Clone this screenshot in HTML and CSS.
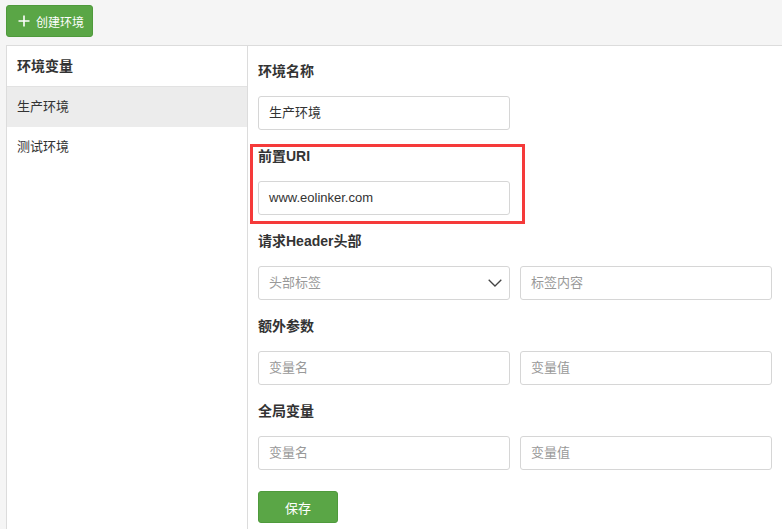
FILE: index.html
```html
<!DOCTYPE html>
<html lang="zh-CN">
<head>
<meta charset="utf-8">
<title>环境管理</title>
<link rel="stylesheet" href="styles.css">
</head>
<body>
<div class="topbar">
  <button class="btn-create"><svg class="plus" viewBox="0 0 12 12" width="12" height="12"><path d="M6 0.5V11.5M0.5 6H11.5" stroke="#fff" stroke-width="1.6" fill="none"/></svg><span>创建环境</span></button>
</div>
<div class="panel">
  <aside class="sidebar">
    <div class="side-head">环境变量</div>
    <div class="side-item active">生产环境</div>
    <div class="side-item">测试环境</div>
  </aside>
  <main class="content">
    <div class="group">
      <div class="label">环境名称</div>
      <div class="row"><div class="field">生产环境</div></div>
    </div>
    <div class="group marked">
      <div class="label">前置URI</div>
      <div class="row"><div class="field">www.eolinker.com</div></div>
    </div>
    <div class="group">
      <div class="label">请求Header头部</div>
      <div class="row">
        <div class="field placeholder select">头部标签<svg class="chev" viewBox="0 0 14 8" width="14" height="8"><path d="M0.7 0.7L7 7L13.3 0.7" stroke="#444" stroke-width="1.3" fill="none"/></svg></div>
        <div class="field placeholder">标签内容</div>
      </div>
    </div>
    <div class="group">
      <div class="label">额外参数</div>
      <div class="row">
        <div class="field placeholder">变量名</div>
        <div class="field placeholder">变量值</div>
      </div>
    </div>
    <div class="group">
      <div class="label">全局变量</div>
      <div class="row">
        <div class="field placeholder">变量名</div>
        <div class="field placeholder">变量值</div>
      </div>
    </div>
    <button class="btn-save">保存</button>
  </main>
</div>
</body>
</html>
```
FILE: styles.css
```css
* { box-sizing: border-box; }
html, body { margin: 0; padding: 0; }
body {
  background: #f5f5f5;
  font-family: "Liberation Sans", "Noto Sans CJK SC", sans-serif;
  font-size: 13px;
  color: #333;
  width: 782px;
  height: 529px;
  overflow: hidden;
}
.topbar {
  height: 45px;
  padding: 5px 0 0 6px;
}
.btn-create {
  display: flex;
  align-items: center;
  gap: 6px;
  height: 32px;
  width: 87px;
  padding: 0 0 0 11px;
  background: #5aa646;
  border: 1px solid #4f9a3c;
  border-radius: 3px;
  color: #fff;
  font-family: inherit;
  font-size: 12px;
}
.plus { flex: none; }
.panel {
  display: flex;
  margin-left: 6px;
  background: #fff;
  border-top: 1px solid #dcdcdc;
  border-left: 1px solid #dcdcdc;
  height: 490px;
}
.sidebar {
  width: 241px;
  flex: none;
  border-right: 1px solid #dcdcdc;
}
.side-head {
  height: 41px;
  line-height: 40px;
  padding-left: 10px;
  font-size: 14px;
  font-weight: bold;
  border-bottom: 1px solid #e2e2e2;
}
.side-item {
  height: 40px;
  line-height: 40px;
  padding-left: 10px;
  font-size: 13px;
}
.side-item.active { background: #ececec; }
.content {
  flex: 1;
  padding: 15px 10px 0 10px;
}
.group {
  position: relative;
  margin-bottom: 16px;
}
.group.marked::after {
  content: "";
  position: absolute;
  top: -2px;
  left: -8px;
  width: 269px;
  bottom: -9px;
  border: 3px solid #f53a3a;
}
.label {
  font-size: 14px;
  font-weight: bold;
  line-height: 20px;
  margin-bottom: 15px;
}
.row {
  display: grid;
  grid-template-columns: 252px 252px;
  gap: 10px;
}
.field {
  height: 34px;
  line-height: 32px;
  border: 1px solid #d6d6d6;
  border-radius: 3px;
  padding-left: 10px;
  font-size: 13px;
  color: #333;
  position: relative;
}
.field.placeholder { color: #999; }
.chev {
  position: absolute;
  right: 7px;
  top: 12px;
}
.btn-save {
  margin-top: 5px;
  width: 80px;
  height: 32px;
  background: #5aa646;
  border: 1px solid #4f9a3c;
  border-radius: 3px;
  color: #fff;
  font-family: inherit;
  font-size: 13px;
}
```
